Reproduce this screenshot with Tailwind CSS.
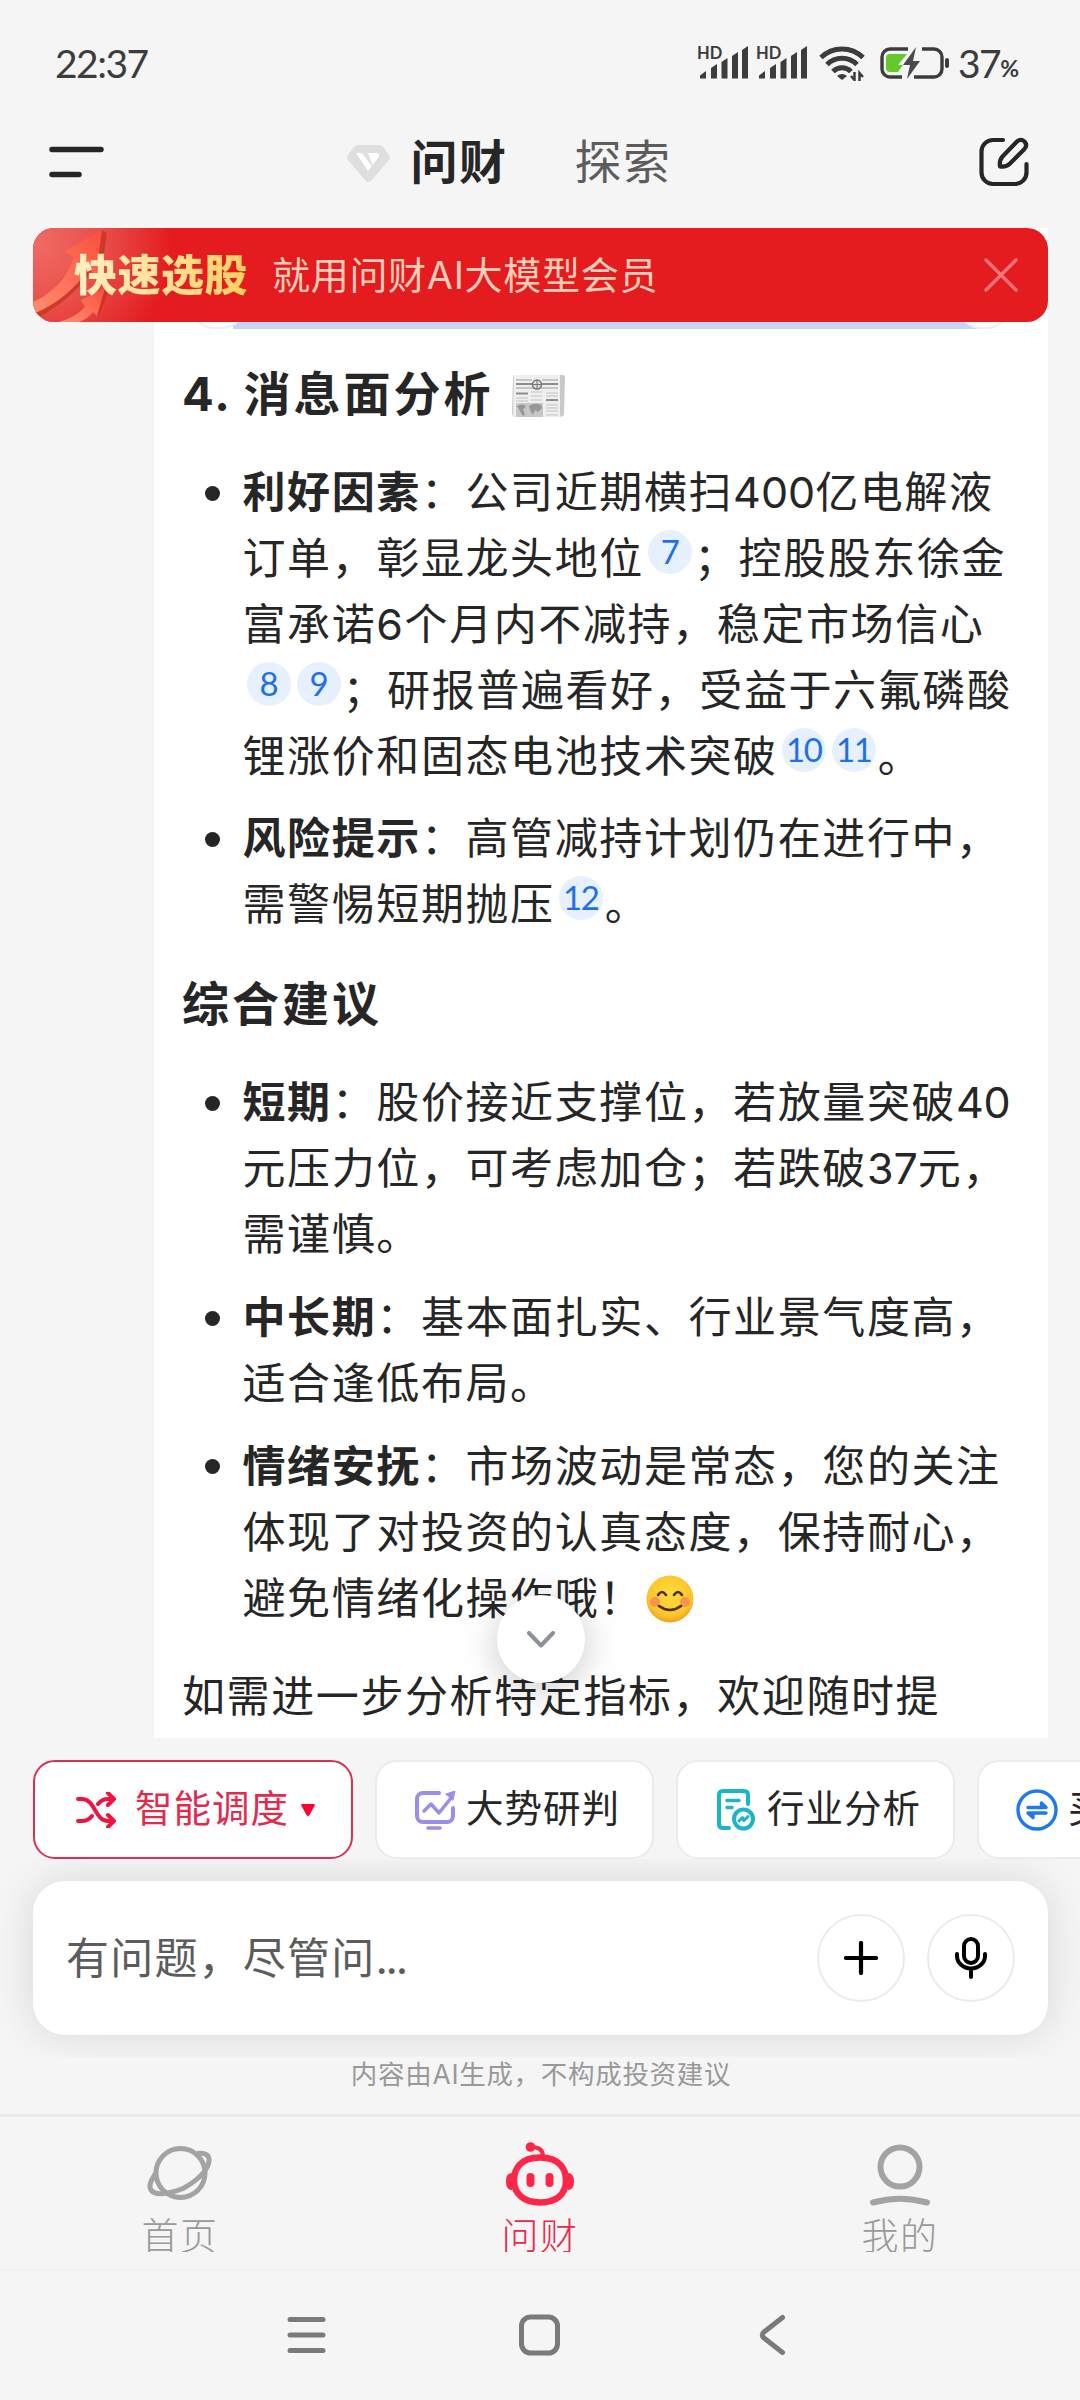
<!DOCTYPE html>
<html lang="zh-CN">

<head>
    <meta charset="UTF-8">
    <meta name="viewport" content="width=device-width, initial-scale=1.0">
    <title>问财</title>
    <script src="https://cdn.jsdelivr.net/npm/@tailwindcss/browser@4"></script>
</head>

<body class="bg-[#f5f5f5]">
    <div class="w-[1080px] h-[2400px] flex flex-col overflow-hidden bg-[#f5f5f5] text-[#262626] whitespace-nowrap font-['Inter','Noto_Sans_CJK_SC',sans-serif]">

        <!-- status bar -->
        <div class="h-32 pb-[2px] pl-[55px] pr-[61px] flex items-center justify-between text-[#3c3c3c] font-['Lato','Noto_Sans_CJK_SC',sans-serif]">
            <span class="text-[39px] tracking-[-1.500px]">22:37</span>
            <div class="flex items-center">
                <svg class="w-[51px] h-9 mr-[8px] overflow-visible" viewBox="0 0 51 36" fill="#3c3c3c">
                    <text x="0" y="13.500" font-size="16.500" font-weight="700" font-family="Lato">HD</text>
                    <path d="M3 33.500v-3l6-4.500v7.500zM14 33.500V23l6-4v14.500zM24.500 33.500V17l6-4v20.500zM35 33.500V11l6-4v26.500zM45 33.500V5l6-4v32.500z" />
                </svg>
                <svg class="w-[51px] h-9 mr-3 overflow-visible" viewBox="0 0 51 36" fill="#3c3c3c">
                    <text x="0" y="13.500" font-size="16.500" font-weight="700" font-family="Lato">HD</text>
                    <path d="M3 33.500v-3l6-4.500v7.500zM14 33.500V23l6-4v14.500zM24.500 33.500V17l6-4v20.500zM35 33.500V11l6-4v26.500zM45 33.500V5l6-4v32.500z" />
                </svg>
                <svg class="w-[47px] h-9 mr-[14px]" viewBox="0 0 47 36" fill="none" stroke="#3c3c3c" stroke-width="5">
                    <path d="M2 12.500a30 30 0 0 1 42 0M8 19.500a21 21 0 0 1 30 0M14 26.500a12.500 12.500 0 0 1 18 0" />
                    <path d="M18 31q5-4 10 0l-5 4z" fill="#3c3c3c" stroke="none" />
                    <path d="M35.500 27v8l-3.500-4M40.500 36v-8l3.500 4" stroke-width="2.500" />
                </svg>
                <svg class="w-[70px] h-9 mr-2" viewBox="0 0 70 36" fill="none">
                    <path d="M28 4H10a8 8 0 0 0-8 8v12a8 8 0 0 0 8 8h12M42 4h12a8 8 0 0 1 8 8v12a8 8 0 0 1-8 8H34" stroke="#3c3c3c" stroke-width="3.400" />
                    <path d="M27 9H10a4 4 0 0 0-4 4v10a4 4 0 0 0 4 4h8l5-7h-5z" fill="#65c92b" />
                    <path d="M36 2 23 20h7l-3 14 13-18h-7z" fill="#4a4a4a" />
                    <rect x="65" y="13" width="4" height="10" rx="2" fill="#3c3c3c" />
                </svg>
                <span class="text-[39px] tracking-[-1.500px]">37</span>
                <span class="text-[23px] mt-2.5 font-bold">%</span>
            </div>
        </div>

        <!-- top tabs -->
        <div class="h-[68px] mb-8 pl-[49px] pr-[51px] flex items-center justify-between">
            <svg class="w-14 h-8" viewBox="0 0 56 32" stroke="#262626" stroke-width="5.500" stroke-linecap="round">
                <path d="M3 3.500h49M3 28.500h27" />
            </svg>
            <div class="flex items-center mr-[66px]">
                <svg class="w-[43px] h-[38px] mr-[21px] mt-1" viewBox="0 0 43 38">
                    <path d="M11 0h21q3 0 5 3l5 7q2 3 0 5L25 35q-3.500 4-7 0L1 15q-2-2 0-5L6 3q2-3 5-3z" fill="#dfdfdf" />
                    <path d="M9 8h6l9.500 13L21 26zM21 8h9q4 1 1 5l-5.500 7z" fill="#fff" />
                </svg>
                <span class="text-[47px] leading-[68px] tracking-[1.500px] font-bold">问财</span>
                <span class="text-[47px] leading-[68px] tracking-[1.500px] text-[#5c5c5c] ml-[67px]">探索</span>
            </div>
            <svg class="w-[50px] h-[50px]" viewBox="0 0 50 50" fill="none" stroke="#262626" stroke-width="4.200" stroke-linecap="round" stroke-linejoin="round">
                <path d="M24 3H14A11.500 11.500 0 0 0 2.500 14.500v21A11.500 11.500 0 0 0 14 47h22a11.500 11.500 0 0 0 11.500-11.500V27" />
                <path d="M21 29.500q-1-6 2.500-10L37.500 5q4-4 8-.5 3.500 4-.5 8L31 26.500q-4 4-10 3z" />
            </svg>
        </div>

        <!-- answer -->
        <div class="relative h-[1510px] overflow-hidden">
            <div class="ml-[154px] w-[894px] h-full bg-white text-[43px] leading-[66px] tracking-[1.600px]">
                <div class="mx-[61px] h-[101px] flex justify-between bg-linear-to-r from-white from-[18px] via-[#c8d3f8] via-[18px] to-[#c8d3f8]">
                    <div class="w-[58px] -ml-[26px] bg-white border-2 border-[#eeeff2] rounded-b-[26px]"></div>
                    <div class="w-[56px] -mr-[25px] bg-white border-2 border-[#eeeff2] rounded-b-[26px]"></div>
                </div>
                <div class="pl-7">
                    <h2 class="mt-[35px] text-[47px] leading-[60px] tracking-[3px] font-bold flex"><span class="tracking-[2px] whitespace-pre">4. </span>消息面分析
                        <svg class="w-[54px] h-11 ml-[18px] mt-[10px]" viewBox="0 0 54 44">
                            <path d="M3 1h48q2 0 2 2l-1 36q0 4-4 4H4q-4 0-4-4L1 3q0-2 2-2z" fill="#c9c9c9" />
                            <path d="M2 1h46v39q0 3 2 3H4q-3 0-3-3z" fill="#efefef" />
                            <path d="M4 6h16M30 6h16M4 14h42" stroke="#9c9c9c" stroke-width="1.200" />
                            <path d="M4 10h16M30 10h16M4 19.500h12M34 26h12" stroke="#8d8d8d" stroke-width="2.200" />
                            <path d="M19 18h11M19 22h11M19 26h11M34 19h12M34 22h12M4 24h12M4 27h12M34 31h12M34 34h12M34 37h12M34 41h12" stroke="#c4c4c4" stroke-width="1.200" />
                            <circle cx="25" cy="10.500" r="4.500" fill="#ddd" stroke="#777" stroke-width="1.500" />
                            <path d="M25 6v9M20.500 10.500h9" stroke="#777" />
                            <path d="M4 29h27v14H4z" fill="#c7c7c7" />
                            <path d="M5 32q5-3 9 0l-3 4 2 4-2 2-3-5zM17 32q6-4 12-1l1 3-4 4-3-2-2 5-3-5z" fill="#979797" />
                        </svg>
                    </h2>

                    <ul class="mt-[35px] flex flex-col gap-4">
                        <li class="flex">
                            <i class="size-[15px] rounded-full bg-[#262626] ml-[23px] mr-[22.500px] mt-[27px]"></i>
                            <div>
                                <b>利好因素</b>：公司近期横扫<span class="tracking-[0px]">400</span>亿电解液<br>
                                订单，彰显龙头地位<span class="inline-flex size-11 ml-[4px] mr-[2px] rounded-full bg-[#e6f0ff] text-[#1f6fe8] text-[33px] leading-[42px] tracking-[-1px] justify-center align-[10px] font-[Lato]">7</span>；控股股东徐金<br>
                                富承诺6个月内不减持，稳定市场信心<br>
                                <span class="inline-flex size-11 ml-[4px] mr-[2px] rounded-full bg-[#e6f0ff] text-[#1f6fe8] text-[33px] leading-[42px] tracking-[-1px] justify-center align-[10px] font-[Lato]">8</span><span class="inline-flex size-11 ml-[4px] mr-[2px] rounded-full bg-[#e6f0ff] text-[#1f6fe8] text-[33px] leading-[42px] tracking-[-1px] justify-center align-[10px] font-[Lato]">9</span>；研报普遍看好，受益于六氟磷酸<br>
                                锂涨价和固态电池技术突破<span class="inline-flex size-11 ml-[4px] mr-[2px] rounded-full bg-[#e6f0ff] text-[#1f6fe8] text-[33px] leading-[42px] tracking-[-1.500px] justify-center align-[10px] font-[Lato]">10</span><span class="inline-flex size-11 ml-[4px] mr-[2px] rounded-full bg-[#e6f0ff] text-[#1f6fe8] text-[33px] leading-[42px] tracking-[-1.500px] justify-center align-[10px] font-[Lato]">11</span>。
                            </div>
                        </li>
                        <li class="flex">
                            <i class="size-[15px] rounded-full bg-[#262626] ml-[23px] mr-[22.500px] mt-[27px]"></i>
                            <div>
                                <b>风险提示</b>：高管减持计划仍在进行中，<br>
                                需警惕短期抛压<span class="inline-flex size-11 ml-[4px] mr-[2px] rounded-full bg-[#e6f0ff] text-[#1f6fe8] text-[33px] leading-[42px] tracking-[-1.500px] justify-center align-[10px] font-[Lato]">12</span>。
                            </div>
                        </li>
                    </ul>

                    <h2 class="mt-[37px] text-[47px] leading-[60px] tracking-[3px] font-bold">综合建议</h2>

                    <ul class="mt-[35px] flex flex-col gap-[17px]">
                        <li class="flex">
                            <i class="size-[15px] rounded-full bg-[#262626] ml-[23px] mr-[22.500px] mt-[27px]"></i>
                            <div>
                                <b>短期</b>：股价接近支撑位，若放量突破<span class="tracking-[-.5px]">40</span><br>
                                元压力位，可考虑加仓；若跌破<span class="tracking-[0px]">37</span>元，<br>
                                需谨慎。
                            </div>
                        </li>
                        <li class="flex">
                            <i class="size-[15px] rounded-full bg-[#262626] ml-[23px] mr-[22.500px] mt-[27px]"></i>
                            <div>
                                <b>中长期</b>：基本面扎实、行业景气度高，<br>
                                适合逢低布局。
                            </div>
                        </li>
                        <li class="flex">
                            <i class="size-[15px] rounded-full bg-[#262626] ml-[23px] mr-[22.500px] mt-[26px]"></i>
                            <div>
                                <b>情绪安抚</b>：市场波动是常态，您的关注<br>
                                体现了对投资的认真态度，保持耐心，<br>
                                避免情绪化操作哦！<svg class="inline-block size-12 ml-[2px] align-[-9px]" viewBox="0 0 48 48" fill="none" stroke-linecap="round">
                                    <defs>
                                        <radialGradient id="face" cx=".5" cy=".4" r=".62">
                                            <stop offset="0" stop-color="#fddc3c" />
                                            <stop offset=".75" stop-color="#fbc52b" />
                                            <stop offset="1" stop-color="#ee9a1f" />
                                        </radialGradient>
                                    </defs>
                                    <circle cx="24" cy="24" r="23.500" fill="url(#face)" />
                                    <circle cx="9" cy="27" r="5" fill="#f2815a" fill-opacity=".75" />
                                    <circle cx="39" cy="27" r="5" fill="#f2815a" fill-opacity=".75" />
                                    <path d="M12 20q4-6 8 0M28 20q4-6 8 0M13 31q11 8 22 0" stroke="#4a2b0c" stroke-width="2.600" />
                                </svg>
                            </div>
                        </li>
                    </ul>

                    <p class="mt-[32px]">如需进一步分析特定指标，欢迎随时提</p>
                </div>
            </div>

            <!-- promo banner over the scrolled answer -->
            <div class="absolute top-0 left-[33px] w-[1015px] h-[94px] rounded-[21px] overflow-hidden bg-[#e41b1f]">
                <svg class="absolute inset-0 w-[160px] h-[94px]" viewBox="0 0 160 94">
                    <defs>
                        <radialGradient id="glow" gradientUnits="userSpaceOnUse" cx="5" cy="15" r="135">
                            <stop offset="0" stop-color="#f06a62" />
                            <stop offset=".45" stop-color="#e9514c" />
                            <stop offset="1" stop-color="#e41b1f" />
                        </radialGradient>
                        <linearGradient id="arrow" x1="0" y1="1" x2="1" y2="0">
                            <stop offset="0" stop-color="#ff8f70" />
                            <stop offset="1" stop-color="#fb4f3c" />
                        </linearGradient>
                    </defs>
                    <path d="M0 0h160v94H0z" fill="url(#glow)" />
                    <path d="M69 2l5 3-6 42-6-10Q46 66 8 88L0 86z" fill="#cf3a28" />
                    <path d="M69 2 32 23l9 7Q28 62 0 74v12q36-15 56-46l7 7z" fill="url(#arrow)" />
                    <path d="M72 60l4 2-10 26-4-1z" fill="#cf3325" />
                    <path d="M72 60 48 72l4 7q-9 10-26 15h20q9-3 14-10l4 4z" fill="url(#arrow)" />
                </svg>
                <div class="relative h-full flex items-center pl-[41px]">
                    <span class="text-[43px] font-black tracking-[.5px] bg-linear-to-r from-[#fff0c4] to-[#ffd061] bg-clip-text text-transparent">快速选股</span>
                    <span class="ml-[24px] text-[38px] tracking-[.7px] text-[#ffcdb8]">就用问财AI大模型会员</span>
                    <svg class="absolute right-[30px] w-[34px] h-[34px]" viewBox="0 0 34 34" stroke="#f9767a" stroke-width="3.200" stroke-linecap="round">
                        <path d="M2 2l30 30M32 2 2 32" />
                    </svg>
                </div>
            </div>

            <!-- scroll to bottom -->
            <div class="absolute left-[497px] top-[1367px] size-[88px] rounded-full bg-white shadow-[0_6px_36px_rgba(0,0,0,0.22)] flex items-center justify-center">
                <svg class="w-7 h-[17px]" viewBox="0 0 28 17" fill="none" stroke="#8e9099" stroke-width="4" stroke-linecap="round" stroke-linejoin="round">
                    <path d="M2 2l12 12.500L26 2" />
                </svg>
            </div>
        </div>

        <!-- quick prompts -->
        <div class="mt-[22px] h-[99px] shrink-0 pl-[33px] flex gap-[22px] text-[37.500px] tracking-[1px]">
            <div class="w-80 shrink-0 rounded-[22px] border-2 border-[#d9304f] bg-white flex items-center pl-[41px] text-[#e32a4c]">
                <svg class="w-10 h-9 mr-[19px]" viewBox="0 0 40 36" fill="none" stroke="#f0123f" stroke-width="4" stroke-linecap="round" stroke-linejoin="round">
                    <path d="M2 7h4c13 0 13 22 26 22h6M32 23l6 6-6 6M2 29h4q6 0 10-5M22 12q4-5 10-5h6M32 1l6 6-6 6" />
                </svg>
                智能调度
                <svg class="w-[14px] h-3 ml-[12px]" viewBox="0 0 14 12" fill="#ff0036">
                    <path d="M1.500 0h11q2 0 1 2L8.500 11q-1.500 2-3 0L.5 2q-1-2 1-2z" />
                </svg>
            </div>
            <div class="w-[279px] shrink-0 rounded-[22px] border-2 border-[#ebebeb] bg-white flex items-center pl-[38px]">
                <svg class="w-[41px] h-10 mr-[10px]" viewBox="0 0 41 40" fill="none" stroke="#9a8fe8" stroke-width="4" stroke-linecap="round" stroke-linejoin="round">
                    <path d="M24 3H8a6 6 0 0 0-6 6v17a6 6 0 0 0 6 6h24a6 6 0 0 0 6-6v-8" />
                    <path d="M9 21l7-7 8 9L36 8M13 38h12" stroke-width="3.500" />
                    <path d="M31 4l9-3-2 9z" fill="#9a8fe8" stroke-width="1" />
                </svg>
                大势研判
            </div>
            <div class="w-[279px] shrink-0 rounded-[22px] border-2 border-[#ebebeb] bg-white flex items-center pl-[39px]">
                <svg class="w-[38px] h-[42px] mr-3" viewBox="0 0 38 42" fill="none" stroke="#1bb5c8" stroke-width="4" stroke-linecap="round" stroke-linejoin="round">
                    <path d="M31 15V6q0-4-4-4H6Q2 2 2 6v29q0 4 4 4h6" />
                    <path d="M10 11.500h12M10 18.500h5" stroke-width="3.500" />
                    <circle cx="26.500" cy="30" r="9.500" />
                    <path d="M22 32l3.500-3.500 1.500 3 4-4" stroke-width="3" />
                </svg>
                行业分析
            </div>
            <div class="w-[279px] shrink-0 rounded-[22px] border-2 border-[#ebebeb] bg-white flex items-center pl-[37px]">
                <svg class="w-[42px] h-[42px] mr-[10px]" viewBox="0 0 42 42" fill="none" stroke="#1f78ee" stroke-width="3.400" stroke-linecap="round" stroke-linejoin="round">
                    <circle cx="21" cy="21" r="19" />
                    <path d="M12 18.500h18L25.500 14v4M30 24H12l5 4.500v-4" />
                </svg>
                买卖时机
            </div>
        </div>

        <!-- input, its shadow stops at the edges of this row -->
        <div class="h-[198px] shrink-0 overflow-hidden pl-[33px] pr-8 py-[22px]">
            <div class="h-full rounded-[32px] bg-white shadow-[0_0_44px_rgba(0,0,0,0.12)] flex items-center px-[33px]">
                <span class="flex-1 text-[43px] tracking-[1.200px] text-[#5c5c5c]">有问题，尽管问<span class="tracking-[-2.200px]">...</span></span>
                <div class="size-[88px] rounded-full border-2 border-[#ebebeb] flex items-center justify-center mr-[22px]">
                    <svg class="size-[34px]" viewBox="0 0 34 34" stroke="#000" stroke-width="4.200" stroke-linecap="round">
                        <path d="M17 2v30M2 17h30" />
                    </svg>
                </div>
                <div class="size-[88px] rounded-full border-2 border-[#ebebeb] flex items-center justify-center">
                    <svg class="w-8 h-[42px]" viewBox="0 0 32 42" fill="none" stroke="#000" stroke-width="4" stroke-linecap="round">
                        <rect x="9" y="2" width="14" height="24" rx="7" />
                        <path d="M2 17v2a14 12.500 0 0 0 28 0v-2M16 32v8" />
                    </svg>
                </div>
            </div>
        </div>

        <p class="h-[57px] shrink-0 pl-[2px] leading-[34px] text-center text-[26.500px] tracking-[.7px] text-[#999]">内容由AI生成，不构成投资建议</p>

        <!-- bottom tabs -->
        <div class="h-[138px] shrink-0 border-t-[3px] border-[#e9e9e9] flex text-[37px] leading-[52px] tracking-[1.500px] font-light text-[#999]">
            <div class="w-1/3 flex flex-col items-center">
                <svg class="w-[66px] h-[56px] mt-[28px]" viewBox="0 0 66 56" fill="none" stroke="#a3a3a3" stroke-width="5">
                    <circle cx="33.500" cy="28" r="24.500" />
                    <path d="M50 8.500c7-1 12 1 12 6 1 10-13 22-26 29C22 49 8 51 4 45c-3-5 1-11 5-17" />
                </svg>
                <div class="h-[38px] mt-[13px] overflow-hidden"><p class="-mt-[3px]">首页</p></div>
            </div>
            <div class="w-1/3 flex flex-col items-center text-[#e8284b]">
                <svg class="w-[68px] h-16 mt-[25px]" viewBox="0 0 68 64" fill="none" stroke="#fd2649" stroke-width="6.500">
                    <path d="M34 15.500c20 0 26 12 26 23 0 14-10 22-26 22S8 52 8 38.500c0-11 6-23 26-23z" />
                    <path d="M37 14q0-9-12-9" stroke-width="4" />
                    <circle cx="24.500" cy="5" r="4.800" fill="#fd2649" stroke="none" />
                    <path d="M6 31q-6 0-6 8.500T6 48zM62 31q6 0 6 8.500T62 48z" fill="#fd2649" stroke="none" />
                    <path d="M24.500 35v6M43.500 35v6" stroke-width="8" stroke-linecap="round" />
                </svg>
                <div class="h-[38px] mt-[8px] overflow-hidden"><p class="-mt-[3px]">问财</p></div>
            </div>
            <div class="w-1/3 flex flex-col items-center">
                <svg class="w-[60px] h-[62px] mt-[27px]" viewBox="0 0 60 62" fill="none" stroke="#a3a3a3" stroke-width="6" stroke-linecap="round">
                    <circle cx="30" cy="23" r="19.500" />
                    <path d="M3 58.500q27-7.500 54 0" />
                </svg>
                <div class="h-[38px] mt-[8px] overflow-hidden"><p class="-mt-[3px]">我的</p></div>
            </div>
        </div>

        <!-- system navigation -->
        <div class="mt-[17px] h-[131px] shrink-0 border-t border-[#eee] flex justify-center items-center pr-[2px] gap-[193px]">
            <svg class="w-[39px] h-[42px]" viewBox="0 0 39 42" stroke="#7a7a7a" stroke-width="5" stroke-linecap="round">
                <path d="M3 5.500h33M3 21h33M3 36.500h33" />
            </svg>
            <svg class="w-[41px] h-[42px]" viewBox="0 0 41 42" fill="none" stroke="#7a7a7a" stroke-width="5">
                <rect x="2.500" y="3" width="36" height="36" rx="9" />
            </svg>
            <svg class="w-[39px] h-[42px]" viewBox="0 0 39 42" fill="none" stroke="#7a7a7a" stroke-width="5" stroke-linecap="round" stroke-linejoin="round">
                <path d="M29.500 3.500 11 18q-3.500 3 0 6l18.500 14.500" />
            </svg>
        </div>
    </div>
</body>

</html>
